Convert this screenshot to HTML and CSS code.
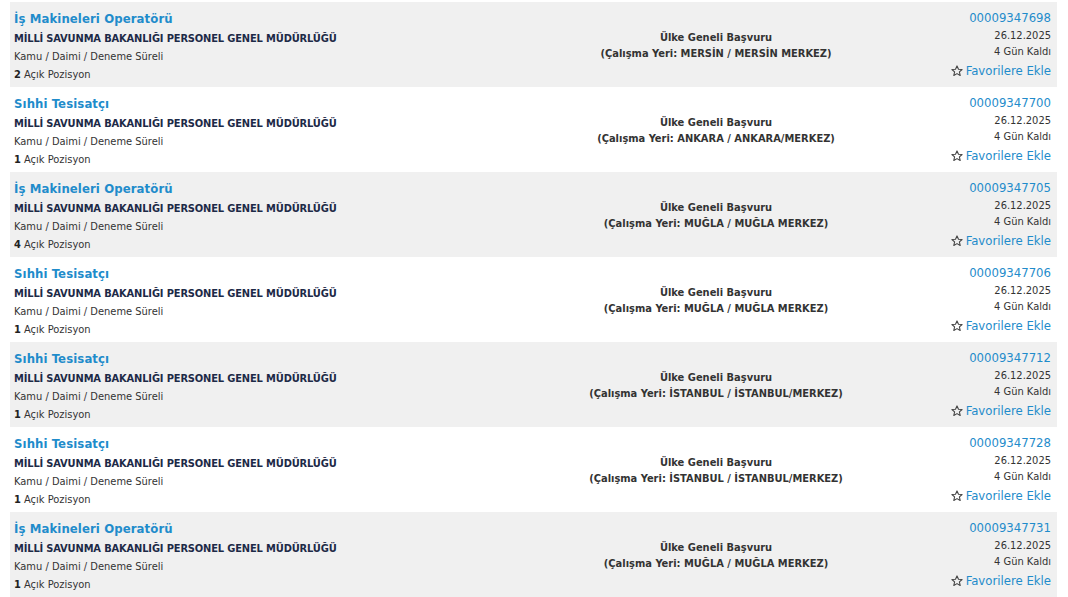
FILE: index.html
```html
<!DOCTYPE html>
<html lang="tr">
<head>
<meta charset="utf-8">
<link rel="stylesheet" href="styles.css">
</head>
<body>
<div class="list">
  <div class="row alt">
    <div class="col-left">
      <a class="title">İş Makineleri Operatörü</a>
      <div class="org">MİLLİ SAVUNMA BAKANLIĞI PERSONEL GENEL MÜDÜRLÜĞÜ</div>
      <div class="meta">Kamu / Daimi / Deneme Süreli</div>
      <div class="meta"><b>2</b> Açık Pozisyon</div>
    </div>
    <div class="col-mid">
      <div>Ülke Geneli Başvuru</div>
      <div>(Çalışma Yeri: MERSİN / MERSİN MERKEZ)</div>
    </div>
    <div class="col-right">
      <a class="id">00009347698</a>
      <div class="small">26.12.2025</div>
      <div class="small">4 Gün Kaldı</div>
      <a class="fav"><svg class="star" viewBox="0 0 12 12"><path d="M6 0.9 L7.5 4.2 L11.1 4.5 L8.4 6.9 L9.2 10.5 L6 8.6 L2.8 10.5 L3.6 6.9 L0.9 4.5 L4.5 4.2 Z"/></svg>Favorilere Ekle</a>
    </div>
  </div>
  <div class="row">
    <div class="col-left">
      <a class="title">Sıhhi Tesisatçı</a>
      <div class="org">MİLLİ SAVUNMA BAKANLIĞI PERSONEL GENEL MÜDÜRLÜĞÜ</div>
      <div class="meta">Kamu / Daimi / Deneme Süreli</div>
      <div class="meta"><b>1</b> Açık Pozisyon</div>
    </div>
    <div class="col-mid">
      <div>Ülke Geneli Başvuru</div>
      <div>(Çalışma Yeri: ANKARA / ANKARA/MERKEZ)</div>
    </div>
    <div class="col-right">
      <a class="id">00009347700</a>
      <div class="small">26.12.2025</div>
      <div class="small">4 Gün Kaldı</div>
      <a class="fav"><svg class="star" viewBox="0 0 12 12"><path d="M6 0.9 L7.5 4.2 L11.1 4.5 L8.4 6.9 L9.2 10.5 L6 8.6 L2.8 10.5 L3.6 6.9 L0.9 4.5 L4.5 4.2 Z"/></svg>Favorilere Ekle</a>
    </div>
  </div>
  <div class="row alt">
    <div class="col-left">
      <a class="title">İş Makineleri Operatörü</a>
      <div class="org">MİLLİ SAVUNMA BAKANLIĞI PERSONEL GENEL MÜDÜRLÜĞÜ</div>
      <div class="meta">Kamu / Daimi / Deneme Süreli</div>
      <div class="meta"><b>4</b> Açık Pozisyon</div>
    </div>
    <div class="col-mid">
      <div>Ülke Geneli Başvuru</div>
      <div>(Çalışma Yeri: MUĞLA / MUĞLA MERKEZ)</div>
    </div>
    <div class="col-right">
      <a class="id">00009347705</a>
      <div class="small">26.12.2025</div>
      <div class="small">4 Gün Kaldı</div>
      <a class="fav"><svg class="star" viewBox="0 0 12 12"><path d="M6 0.9 L7.5 4.2 L11.1 4.5 L8.4 6.9 L9.2 10.5 L6 8.6 L2.8 10.5 L3.6 6.9 L0.9 4.5 L4.5 4.2 Z"/></svg>Favorilere Ekle</a>
    </div>
  </div>
  <div class="row">
    <div class="col-left">
      <a class="title">Sıhhi Tesisatçı</a>
      <div class="org">MİLLİ SAVUNMA BAKANLIĞI PERSONEL GENEL MÜDÜRLÜĞÜ</div>
      <div class="meta">Kamu / Daimi / Deneme Süreli</div>
      <div class="meta"><b>1</b> Açık Pozisyon</div>
    </div>
    <div class="col-mid">
      <div>Ülke Geneli Başvuru</div>
      <div>(Çalışma Yeri: MUĞLA / MUĞLA MERKEZ)</div>
    </div>
    <div class="col-right">
      <a class="id">00009347706</a>
      <div class="small">26.12.2025</div>
      <div class="small">4 Gün Kaldı</div>
      <a class="fav"><svg class="star" viewBox="0 0 12 12"><path d="M6 0.9 L7.5 4.2 L11.1 4.5 L8.4 6.9 L9.2 10.5 L6 8.6 L2.8 10.5 L3.6 6.9 L0.9 4.5 L4.5 4.2 Z"/></svg>Favorilere Ekle</a>
    </div>
  </div>
  <div class="row alt">
    <div class="col-left">
      <a class="title">Sıhhi Tesisatçı</a>
      <div class="org">MİLLİ SAVUNMA BAKANLIĞI PERSONEL GENEL MÜDÜRLÜĞÜ</div>
      <div class="meta">Kamu / Daimi / Deneme Süreli</div>
      <div class="meta"><b>1</b> Açık Pozisyon</div>
    </div>
    <div class="col-mid">
      <div>Ülke Geneli Başvuru</div>
      <div>(Çalışma Yeri: İSTANBUL / İSTANBUL/MERKEZ)</div>
    </div>
    <div class="col-right">
      <a class="id">00009347712</a>
      <div class="small">26.12.2025</div>
      <div class="small">4 Gün Kaldı</div>
      <a class="fav"><svg class="star" viewBox="0 0 12 12"><path d="M6 0.9 L7.5 4.2 L11.1 4.5 L8.4 6.9 L9.2 10.5 L6 8.6 L2.8 10.5 L3.6 6.9 L0.9 4.5 L4.5 4.2 Z"/></svg>Favorilere Ekle</a>
    </div>
  </div>
  <div class="row">
    <div class="col-left">
      <a class="title">Sıhhi Tesisatçı</a>
      <div class="org">MİLLİ SAVUNMA BAKANLIĞI PERSONEL GENEL MÜDÜRLÜĞÜ</div>
      <div class="meta">Kamu / Daimi / Deneme Süreli</div>
      <div class="meta"><b>1</b> Açık Pozisyon</div>
    </div>
    <div class="col-mid">
      <div>Ülke Geneli Başvuru</div>
      <div>(Çalışma Yeri: İSTANBUL / İSTANBUL/MERKEZ)</div>
    </div>
    <div class="col-right">
      <a class="id">00009347728</a>
      <div class="small">26.12.2025</div>
      <div class="small">4 Gün Kaldı</div>
      <a class="fav"><svg class="star" viewBox="0 0 12 12"><path d="M6 0.9 L7.5 4.2 L11.1 4.5 L8.4 6.9 L9.2 10.5 L6 8.6 L2.8 10.5 L3.6 6.9 L0.9 4.5 L4.5 4.2 Z"/></svg>Favorilere Ekle</a>
    </div>
  </div>
  <div class="row alt">
    <div class="col-left">
      <a class="title">İş Makineleri Operatörü</a>
      <div class="org">MİLLİ SAVUNMA BAKANLIĞI PERSONEL GENEL MÜDÜRLÜĞÜ</div>
      <div class="meta">Kamu / Daimi / Deneme Süreli</div>
      <div class="meta"><b>1</b> Açık Pozisyon</div>
    </div>
    <div class="col-mid">
      <div>Ülke Geneli Başvuru</div>
      <div>(Çalışma Yeri: MUĞLA / MUĞLA MERKEZ)</div>
    </div>
    <div class="col-right">
      <a class="id">00009347731</a>
      <div class="small">26.12.2025</div>
      <div class="small">4 Gün Kaldı</div>
      <a class="fav"><svg class="star" viewBox="0 0 12 12"><path d="M6 0.9 L7.5 4.2 L11.1 4.5 L8.4 6.9 L9.2 10.5 L6 8.6 L2.8 10.5 L3.6 6.9 L0.9 4.5 L4.5 4.2 Z"/></svg>Favorilere Ekle</a>
    </div>
  </div>
</div>
</body>
</html>
```

FILE: styles.css
```css
html, body {
  background: #ffffff;
}
body {
  margin: 2px 11px 0 10px;
  font-family: "DejaVu Sans Condensed", "DejaVu Sans", Verdana, sans-serif;
  color: #333333;
  font-size: 11px;
}
.list {
  display: flex;
  flex-direction: column;
}
.row {
  display: grid;
  grid-template-columns: 537px 330px 1fr;
  height: 85px;
  box-sizing: border-box;
  padding: 6px 6px 0 4px;
  background: #ffffff;
}
.row.alt {
  background: #f0f0f0;
}
.col-left {
  display: flex;
  flex-direction: column;
}
.title {
  font-size: 13px;
  font-weight: bold;
  line-height: 22px;
  color: #1f8ccb;
  letter-spacing: 0.1px;
}
.org {
  font-size: 11px;
  font-weight: bold;
  line-height: 18px;
  color: #1d2a47;
  letter-spacing: -0.15px;
}
.meta {
  font-size: 11px;
  line-height: 18px;
  color: #333333;
}
.meta b {
  color: #222222;
}
.col-mid {
  display: flex;
  flex-direction: column;
  justify-content: center;
  align-items: center;
  font-weight: bold;
  font-size: 11px;
  line-height: 16px;
  color: #333333;
  padding-bottom: 3px;
}
.col-right {
  display: flex;
  flex-direction: column;
  align-items: flex-end;
}
.id {
  font-size: 13px;
  line-height: 20px;
  color: #1f8ccb;
}
.small {
  font-size: 11px;
  line-height: 16px;
  color: #333333;
}
.fav {
  font-size: 13px;
  line-height: 21px;
  color: #1f8ccb;
  display: flex;
  align-items: center;
  gap: 3px;
}
.star {
  width: 12px;
  height: 12px;
  fill: none;
  stroke: #444444;
  stroke-width: 1.1;
  stroke-linejoin: round;
}
```
